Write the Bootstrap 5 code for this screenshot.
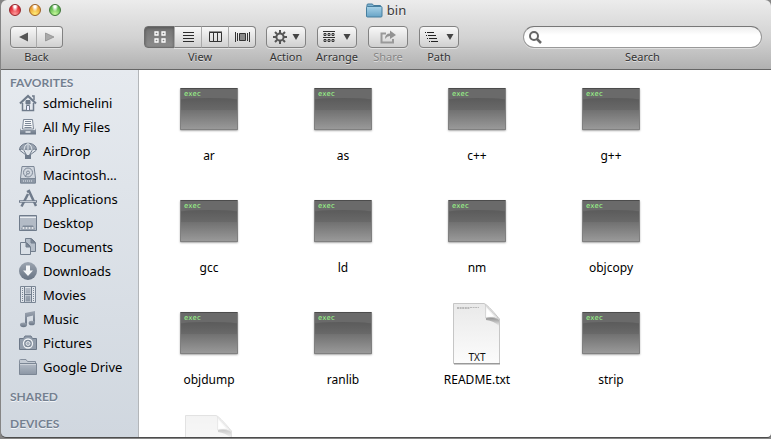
<!DOCTYPE html>
<html lang="en">
<head>
<meta charset="utf-8">
<meta name="viewport" content="width=device-width, initial-scale=1">
<title>bin</title>
<link href="https://cdn.jsdelivr.net/npm/bootstrap@5.3.0/dist/css/bootstrap.min.css" rel="stylesheet">
<style>
body{font-family:"Noto Sans","Open Sans",sans-serif;font-size:12px;line-height:16px;color:#000;background:#858585}
.finder{border-left:1px solid #858585;padding-bottom:2px}
.finder-pane{border-radius:6px 6px 4px 5px;overflow:hidden;box-shadow:0 1px 0 #4d4d4d}
.finder-head{background:linear-gradient(#ececec,#d2d2d2 55%,#b1b1b1);border-bottom:1px solid #666;height:70px}
.title-row{height:20px;padding-left:8px}
.light{width:12px;height:12px;border-radius:50%;border:1px solid;padding:0}
.light-red{background:radial-gradient(ellipse at 50% 10%,#fff 0 15%,transparent 45%),radial-gradient(circle at 50% 90%,#ff9c9c,#e02a35 65%);border-color:#93262b}
.light-yellow{background:radial-gradient(ellipse at 50% 10%,#fff 0 15%,transparent 45%),radial-gradient(circle at 50% 90%,#ffee78,#eca233 65%);border-color:#9c6024}
.light-green{background:radial-gradient(ellipse at 50% 10%,#fff 0 15%,transparent 45%),radial-gradient(circle at 50% 90%,#c8fa9c,#5cb74d 65%);border-color:#3d7437}
.win-title{font-size:13px;color:#3a3a3a;text-shadow:0 1px 0 #f4f4f4}
.tools{padding:6px 9px 0}
.tool{display:flex;flex-direction:column;align-items:center;white-space:nowrap;font-size:11px;color:#333;text-shadow:0 1px 0 #dedede}
.tool-label{margin-top:1px}
.tool-w{width:40px}
.tool-gap{gap:11px;margin-left:10px}
.tool-back{margin-right:81px}
.tool-search{width:239px;margin-left:auto}
.tb{height:22px;padding:0;border:1px solid #828282;border-radius:4px;background:linear-gradient(#f8f8f8,#d0d0d0);box-shadow:0 1px 0 #e2e2e2;display:flex;align-items:center;justify-content:center;color:#333}
.tb:hover{background:linear-gradient(#fff,#d8d8d8);border-color:#828282}
.tb svg{display:block}
.tb-nav{width:27px}
.tb-view{width:28px}
.tb-on{width:31px}
.tb-on,.tb-on:hover{background:linear-gradient(#737373,#8d8d8d);box-shadow:inset 0 1px 3px #555;border-color:#6e6e6e}
.btn-group .tb+.tb{border-left-color:#aaa}
.tool-off{color:#858585}
.search-box{height:22px;border:1px solid #999;border-top-color:#777;border-radius:11px;background:linear-gradient(#eee,#fff 40%);box-shadow:0 1px 0 #e0e0e0;padding:0 8px 0 5px}
.search-box input{border:0;background:transparent;outline:0;min-width:0;font-size:12px}
.side{width:138px;border-right:1px solid #b3b6b9;background:linear-gradient(#e6eaef,#d0d7df);padding-top:4px;overflow:hidden}
.side-head{font-family:Lato,"Noto Sans",sans-serif;font-size:12px;font-weight:700;color:#748090;padding-left:9px;text-shadow:0 1px 0 #f2f5f8;margin:0;line-height:17px}
.side-list{margin-bottom:9px}
.side-link{height:24px;padding-left:17px;gap:5px;font-size:13px;color:#000;text-decoration:none;white-space:nowrap}
.side-link svg,.drive-sliver{width:20px;height:20px;flex:none;color:#6f7b8b}
.head-gap{margin-bottom:10px}
.files{display:grid;grid-template-columns:repeat(auto-fill,134px);grid-auto-rows:112px;align-content:start;padding:8px 0 0 3px;background:#fff;overflow:hidden}
.file{display:flex;flex-direction:column;align-items:center;color:#000;text-decoration:none}
.art{height:64px;margin-bottom:6px;display:flex;align-items:center;justify-content:center}
.exec-tile{position:relative;width:58px;height:42px;overflow:hidden;background:linear-gradient(#555 20%,#999);border:1px solid #808080;border-top-color:#4c4c4c;border-radius:1px;box-shadow:0 1px 2px #aaa;margin-bottom:2px}
.exec-tile::before{content:"";position:absolute;left:0;right:0;top:0;height:13px;background:#6a6a6a}
.exec-tile::after{content:"";position:absolute;left:-10px;right:-10px;top:9px;height:12px;border-radius:50% 50% 0 0/4px 4px 0 0;background:linear-gradient(#5b5b5b,#696969)}
.exec-word{position:absolute;left:3px;top:1px;font:400 7px/9px "DejaVu Sans Mono",monospace;color:#9dff8a}
.doc{position:relative;width:50px;height:64px}
.doc-kind{position:absolute;left:0;right:0;bottom:3px;text-align:center;font-size:10px;line-height:12px;color:#111}
</style>
<script src="https://cdn.jsdelivr.net/npm/bootstrap@5.3.0/dist/js/bootstrap.bundle.min.js"></script>
</head>
<body>
<svg width="0" height="0" class="position-absolute" aria-hidden="true">
<defs>
<linearGradient id="slate" x1="0" y1="0" x2="0" y2="1"><stop offset="0" stop-color="#9ca5b1"/><stop offset="1" stop-color="#687484"/></linearGradient>
<linearGradient id="pale" x1="0" y1="0" x2="0" y2="1"><stop offset="0" stop-color="#b3bbc6"/><stop offset="1" stop-color="#8b96a4"/></linearGradient>
<linearGradient id="paper" x1="0" y1="0" x2="0" y2="1"><stop offset="0" stop-color="#e9e9e9"/><stop offset="1" stop-color="#fcfcfc"/></linearGradient>
<linearGradient id="curl" x1="0" y1="1" x2="1" y2="0"><stop offset="0" stop-color="#fff"/><stop offset=".45" stop-color="#eee"/><stop offset="1" stop-color="#aaa"/></linearGradient>
<linearGradient id="shade" x1="0" y1="0" x2="0" y2="1"><stop offset="0" stop-color="#888"/><stop offset="1" stop-color="#eee"/></linearGradient>
<linearGradient id="blue" x1="0" y1="0" x2="0" y2="1"><stop offset="0" stop-color="#a9d3e8"/><stop offset="1" stop-color="#67a3c6"/></linearGradient>
</defs>
<symbol id="page" viewBox="0 0 50 64"><path d="M2 62.500H48" stroke="#ccc"/><path d="M1.500 1.500H32Q35 2 47.500 17V61.500H1.500Z" fill="url(#paper)" stroke="#c6c6c6"/><path d="M2 61.500H48" stroke="#999"/><path d="M34 15H45L47 18V24Q42 19 34 18Z" fill="url(#shade)"/><path d="M33.500 3V16Q41 14 47 17.500Z" fill="url(#curl)" stroke="#c4c4c4" stroke-width=".6"/><path d="M34.500 6V14.500H42Z" fill="#fff"/></symbol>
</svg>
<div class="finder vh-100 overflow-hidden">
<div class="finder-pane h-100 d-flex flex-column">
<header class="finder-head flex-shrink-0">
<div class="title-row d-flex align-items-center position-relative">
<div class="d-flex gap-2">
<button class="light light-red" aria-label="Close"></button><button class="light light-yellow" aria-label="Minimize"></button><button class="light light-green" aria-label="Zoom"></button>
</div>
<div class="win-title position-absolute start-0 end-0 d-flex justify-content-center align-items-center gap-1 pe-none">
<svg width="17" height="15" viewBox="0 0 17 15"><path d="M1 13.500V2Q1 1 2 1H6Q7 1 7.500 2.500H14.500V5" fill="#7fb3d0" stroke="#447b9c"/><rect x=".5" y="3.500" width="15.500" height="10.500" rx="1" fill="url(#blue)" stroke="#467f9f"/></svg>
<span>bin</span></div>
</div>
<div class="tools d-flex">
<div class="tool tool-back">
<div class="btn-group">
<button class="btn tb tb-nav" aria-label="Back"><svg width="10" height="10"><path d="M0 5L9 .5V9.500Z" fill="#555"/></svg></button>
<button class="btn tb tb-nav" aria-label="Forward"><svg width="10" height="10"><path d="M9 5L.5 1V9Z" fill="#aaa" stroke="#888" stroke-width=".7"/></svg></button>
</div><span class="tool-label">Back</span></div>
<div class="tool">
<div class="btn-group">
<button class="btn tb tb-view tb-on" aria-label="Icons"><svg width="12" height="12" fill="none" stroke="#fff" stroke-width="1.300"><path d="M1 1h3v3h-3zM8 1h3v3h-3zM1 8h3v3h-3zM8 8h3v3h-3z"/></svg></button>
<button class="btn tb tb-view" aria-label="List"><svg width="11" height="12" stroke="#2c2c2c"><path d="M0 1.500H11M0 4.500H11M0 7.500H11M0 10.500H11"/></svg></button>
<button class="btn tb tb-view" aria-label="Columns"><svg width="13" height="12" fill="none" stroke="#333"><path d="M.5 1.500H12.500V10.500H.5ZM4.500 1V11M8.500 1V11M0 1H13" /></svg></button>
<button class="btn tb tb-view" aria-label="Cover flow"><svg width="15" height="12" stroke="#333"><path d="M.5 1V11M2.500 2V10M12.500 2V10M14.500 1V11"/><path d="M4.500 2.500H10.500V9.500H4.500Z" fill="#888"/></svg></button>
</div><span class="tool-label">View</span></div>
<div class="d-flex tool-gap">
<div class="tool tool-w"><button class="btn tb w-100 gap-1" aria-label="Action"><svg width="16" height="16" viewBox="-8 -8 16 16" fill="none" stroke="#555"><circle r="3.600" stroke-width="2"/><path d="M0-4V-7M0 4V7M4 0H7M-4 0H-7M3-3L5-5M-3 3L-5 5M3 3L5 5M-3-3L-5-5" stroke-width="2"/></svg><svg width="8" height="6"><path d="M.5 0H7.500L4 6Z" fill="#444"/></svg></button><span class="tool-label">Action</span></div>
<div class="tool tool-w"><button class="btn tb w-100 gap-2" aria-label="Arrange"><svg width="12" height="12" fill="none" stroke="#333"><path d="M0 .5H12M0 6.500H12" /><path d="M1 2.500h2v2h-2zM5 2.500h2v2h-2zM9 2.500h2v2h-2zM1 8.500h2v2h-2zM5 8.500h2v2h-2zM9 8.500h2v2h-2z"/></svg><svg width="8" height="6"><path d="M.5 0H7.500L4 6Z" fill="#444"/></svg></button><span class="tool-label">Arrange</span></div>
<div class="tool tool-w tool-off"><button class="btn tb w-100" aria-label="Share"><svg width="18" height="14" fill="none"><path d="M7 3.500H2.500V12.500H14V9" stroke="#999" stroke-width="2"/><path d="M6 9Q6 3.500 11 3.500V.5L17 5L11 9V6Q8 6 6 9" fill="#929292"/></svg></button><span class="tool-label">Share</span></div>
<div class="tool tool-w"><button class="btn tb w-100 gap-2" aria-label="Path"><svg width="13" height="12" stroke="#222"><path d="M0 1.500H1M2 1.500H9M1 4.500H2M3 4.500H11M2 7.500H3M4 7.500H12M4 10.500H5M6 10.500H13"/></svg><svg width="8" height="6"><path d="M.5 0H7.500L4 6Z" fill="#444"/></svg></button><span class="tool-label">Path</span></div>
</div>
<div class="tool tool-search"><div class="search-box w-100 d-flex align-items-center"><svg width="13" height="13" fill="none" stroke="#666" stroke-width="2"><circle cx="5" cy="5" r="4"/><path d="M8 8L12 12" stroke-width="2.500"/></svg><input id="q" type="text" class="flex-fill"></div><label class="tool-label" for="q">Search</label></div>
</div>
</header>
<main class="d-flex flex-fill overflow-hidden">
<nav class="side flex-shrink-0" aria-label="Sidebar">
<h2 class="side-head">FAVORITES</h2>
<div class="side-list">
<a href="#" class="side-link d-flex align-items-center"><svg viewBox="0 0 20 20" fill="none" stroke="currentColor"><path d="M14 3H16V7" stroke-width="1.500"/><path d="M2 10.500L10 3L18 10.500" stroke-width="2.200"/><path d="M4.500 10V17.500H15.500V10M4 17.500H16" stroke-width="1.500"/><path d="M8 7.500H12V11H8Z" fill="currentColor"/><path d="M8.500 17V12.500H11.500V17" fill="#eef"/></svg>sdmichelini</a>
<a href="#" class="side-link d-flex align-items-center"><svg viewBox="0 0 20 20"><path d="M5.500 2.500H14.500L15.500 12H4.500Z" fill="#f6f8fa" stroke="#7d8897"/><path d="M7 4.500H13M7 6.500H13M6.500 8.500H13.500M6.500 10.500H13.500" stroke="#7d8897"/><path d="M3 11L2 13V17.500H18V13L17 11V13H3Z" fill="url(#slate)"/><path d="M7.500 15H12.500" stroke="#e9edf2" stroke-width="1.500"/></svg>All My Files</a>
<a href="#" class="side-link d-flex align-items-center"><svg viewBox="0 0 20 20" fill="none" stroke="currentColor"><path d="M1.500 9C1.500 0 18.500 0 18.500 9Q16 7 14 9Q12 7 10 9Q8 7 6 9Q4 7 1.500 9Z" fill="#98a2af"/><path d="M6 9Q6 4 10 2.500Q14 4 14 9M10 2.500V13" stroke="#dce2e8"/><path d="M2 9.500L8 14M18 9.500L12 14M6 9.500L8.500 14M14 9.500L11.500 14"/><path d="M7 14H13V18H7Z" fill="currentColor" stroke="none"/></svg>AirDrop</a>
<a href="#" class="side-link d-flex align-items-center"><svg viewBox="0 0 20 20" fill="none" stroke="#7d8897"><path d="M4 1.500H16L17.500 13V18H2.500V13Z" fill="#d1d7df"/><path d="M2.500 13.500H17.500V18H2.500Z" fill="#8d98a6"/><circle cx="10" cy="7.500" r="4.500"/><circle cx="10" cy="7.500" r="1.500"/><path d="M9 9L7 12"/><path d="M5 16H15" stroke="#e5eaf0" stroke-dasharray="1 1"/></svg>Macintosh…</a>
<a href="#" class="side-link d-flex align-items-center"><svg viewBox="0 0 20 20" fill="none" stroke="currentColor"><path d="M9 3L11 2L18 17" stroke-width="2.500"/><path d="M10 5L3.500 17.500" stroke-width="2.500"/><path d="M1 12.500H19" stroke-width="2.500"/><path d="M2 12.500H18" stroke="#c2c9d2"/></svg>Applications</a>
<a href="#" class="side-link d-flex align-items-center"><svg viewBox="0 0 20 20"><path d="M1.500 2.500H18.500V17.500H1.500Z" fill="#b3bbc6" stroke="#6f7b8b"/><path d="M2 4.500H18" stroke="#e9edf1"/><path d="M3 16.500L5 12.500H15L17 16.500Z" fill="#7e8998"/><path d="M4.500 15H6.500M7.500 15H9.500M10.500 15H12.500M13.500 15H15.500" stroke="#fff" stroke-width="1.500"/></svg>Desktop</a>
<a href="#" class="side-link d-flex align-items-center"><svg viewBox="0 0 20 20" stroke="#727e8d"><path d="M7.500 1.500H13.500L17.500 5.500V14.500H7.500Z" fill="#b5bec9"/><path d="M13 2V6H17Z" fill="#7f8a99"/><path d="M2.500 5.500H8.500L12.500 9.500V17.500H2.500Z" fill="#dae0e7"/><path d="M8 6V10H12Z" fill="#7f8a99"/></svg>Documents</a>
<a href="#" class="side-link d-flex align-items-center"><svg viewBox="0 0 20 20"><circle cx="10" cy="10" r="9" fill="url(#slate)"/><path d="M8 4.500H12V9.500H15L10 15L5 9.500H8Z" fill="#f4f6f8"/></svg>Downloads</a>
<a href="#" class="side-link d-flex align-items-center"><svg viewBox="0 0 20 20"><path d="M2.500 1.500H17.500V17.500H2.500Z" fill="#e0e5eb" stroke="#7a8695"/><path d="M4.500 3V17M15.500 3V17" stroke="#7a8695" stroke-dasharray="1 1"/><path d="M6.500 2V17M13.500 2V17M6 9.500H14" stroke="#727e8d"/><path d="M7.500 3H12.500V8.500H7.500ZM7.500 10.500H12.500V16.500H7.500Z" fill="url(#pale)"/></svg>Movies</a>
<a href="#" class="side-link d-flex align-items-center"><svg viewBox="0 0 20 20" fill="url(#slate)"><path d="M7 4L17 2V14H15V6.500L9 8V16H7Z"/><ellipse cx="5.500" cy="15.800" rx="3.500" ry="2.400"/><ellipse cx="13.800" cy="14" rx="3.200" ry="2.300"/></svg>Music</a>
<a href="#" class="side-link d-flex align-items-center"><svg viewBox="0 0 20 20"><path d="M1.500 5.500H5.500L7 3H13L14.500 5.500H18.500V16.500H1.500Z" fill="#929dab" stroke="#6c7888"/><circle cx="10" cy="10.500" r="4.500" fill="#7f8b9a" stroke="#f0f3f6" stroke-width="1.300"/><circle cx="10" cy="10.500" r="2" fill="#a7b0bc" stroke="#e4e8ec"/></svg>Pictures</a>
<a href="#" class="side-link d-flex align-items-center"><svg viewBox="0 0 20 20"><path d="M1.500 6.500V3.500Q1.500 2.500 2.500 2.500H8L9.500 4.500H17.500V6.500" fill="#c4cbd4" stroke="#858f9d"/><path d="M1.500 6.500H18.500V17.500H1.500Z" fill="url(#pale)" stroke="#7c8795"/><path d="M2 7.500H18" stroke="#ccd2d9"/></svg>Google Drive</a>
</div>
<h2 class="side-head head-gap">SHARED</h2>
<h2 class="side-head">DEVICES</h2>
<div class="side-link d-flex align-items-end"><svg class="drive-sliver" viewBox="0 0 20 20"><circle cx="10" cy="10" r="9" fill="#6f7b8b"/></svg></div>
</nav>
<section class="files flex-fill" aria-label="Files">
<a href="#" class="file"><span class="art"><span class="exec-tile"><span class="exec-word z-1">exec</span></span></span>ar</a>
<a href="#" class="file"><span class="art"><span class="exec-tile"><span class="exec-word z-1">exec</span></span></span>as</a>
<a href="#" class="file"><span class="art"><span class="exec-tile"><span class="exec-word z-1">exec</span></span></span>c++</a>
<a href="#" class="file"><span class="art"><span class="exec-tile"><span class="exec-word z-1">exec</span></span></span>g++</a>
<a href="#" class="file"><span class="art"><span class="exec-tile"><span class="exec-word z-1">exec</span></span></span>gcc</a>
<a href="#" class="file"><span class="art"><span class="exec-tile"><span class="exec-word z-1">exec</span></span></span>ld</a>
<a href="#" class="file"><span class="art"><span class="exec-tile"><span class="exec-word z-1">exec</span></span></span>nm</a>
<a href="#" class="file"><span class="art"><span class="exec-tile"><span class="exec-word z-1">exec</span></span></span>objcopy</a>
<a href="#" class="file"><span class="art"><span class="exec-tile"><span class="exec-word z-1">exec</span></span></span>objdump</a>
<a href="#" class="file"><span class="art"><span class="exec-tile"><span class="exec-word z-1">exec</span></span></span>ranlib</a>
<a href="#" class="file"><span class="art"><span class="doc"><svg width="50" height="64"><use href="#page"/><path d="M5 5.500H27M5 6.500H18" stroke="#b9b9b9" stroke-dasharray="2 .6"/></svg><span class="doc-kind">TXT</span></span></span>README.txt</a>
<a href="#" class="file"><span class="art"><span class="exec-tile"><span class="exec-word z-1">exec</span></span></span>strip</a>
<a href="#" class="file" aria-label="Document"><span class="art"><span class="doc opacity-50"><svg width="50" height="64"><use href="#page"/></svg></span></span></a>
</section>
</main>
</div>
</div>
</body>
</html>
